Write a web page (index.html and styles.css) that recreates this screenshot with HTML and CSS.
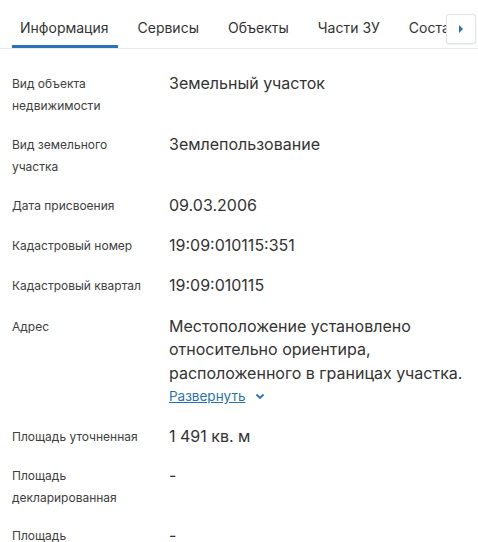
FILE: index.html
```html
<!DOCTYPE html>
<html lang="ru">
<head>
    <meta charset="UTF-8">
    <meta name="viewport" content="width=device-width, initial-scale=1.0">
    <title>Информация</title>
    <link rel="stylesheet" href="styles.css">
</head>
<body>
    <div class="tabs">
        <div class="tab-list">
            <div class="tab active">Информация</div>
            <div class="tab">Сервисы</div>
            <div class="tab">Объекты</div>
            <div class="tab">Части ЗУ</div>
            <div class="tab">Состав</div>
        </div>
        <button class="tab-next">
            <svg width="6" height="8" viewBox="0 0 6 8"><path d="M1 0 L5 4 L1 8 Z" fill="#2a72b8"/></svg>
        </button>
    </div>

    <!-- Info rows -->
    <div class="info">
        <div class="row">
            <div class="label">Вид объекта недвижимости</div>
            <div class="value">Земельный участок</div>
        </div>
        <div class="row">
            <div class="label">Вид земельного участка</div>
            <div class="value">Землепользование</div>
        </div>
        <div class="row">
            <div class="label">Дата присвоения</div>
            <div class="value">09.03.2006</div>
        </div>
        <div class="row">
            <div class="label">Кадастровый номер</div>
            <div class="value">19:09:010115:351</div>
        </div>
        <div class="row">
            <div class="label">Кадастровый квартал</div>
            <div class="value">19:09:010115</div>
        </div>
        <div class="row">
            <div class="label">Адрес</div>
            <div class="value">
                Местоположение установлено относительно ориентира, расположенного в границах участка.
                <div class="expand">
                    <a href="#">Развернуть</a>
                    <svg width="10" height="7" viewBox="0 0 10 7"><path d="M1.5 1.5 L5 5 L8.5 1.5" fill="none" stroke="#2a72b8" stroke-width="1.8"/></svg>
                </div>
            </div>
        </div>
        <div class="row">
            <div class="label">Площадь уточненная</div>
            <div class="value">1 491 кв. м</div>
        </div>
        <div class="row">
            <div class="label">Площадь декларированная</div>
            <div class="value">-</div>
        </div>
        <div class="row">
            <div class="label">Площадь</div>
            <div class="value">-</div>
        </div>
    </div>
</body>
</html>
```

FILE: styles.css
```css
* {
    margin: 0;
    padding: 0;
    box-sizing: border-box;
}

body {
    background: #fff;
    color: #333;
    font-family: Inter, "Noto Sans", sans-serif;
    overflow: hidden;
}

/* Tabs */
.tabs {
    display: flex;
    align-items: flex-end;
    border-bottom: 1px solid #e6e8eb;
    height: 49px;
    position: relative;
}

.tab-list {
    display: flex;
    overflow: hidden;
    width: 100%;
    white-space: nowrap;
}

.tab {
    font-size: 14px;
    color: #333;
    padding: 0 9px 7px 8px;
    margin-right: 12px;
    border-bottom: 3px solid transparent;
    line-height: 20px;
}

.tab:first-child {
    margin-left: 12px;
}

.tab.active {
    border-bottom-color: #2a72b8;
}

.tab-next {
    position: absolute;
    right: 2px;
    top: 14px;
    width: 30px;
    height: 30px;
    border: 1px solid #dde3ea;
    border-radius: 3px;
    background: #fff;
    display: flex;
    align-items: center;
    justify-content: center;
    box-shadow: 0 1px 2px rgba(0, 0, 0, 0.06);
}

/* Info rows */
.info {
    padding: 23px 12px 0;
}

.row {
    display: flex;
    gap: 17px;
    margin-bottom: 16px;
}

.label {
    width: 140px;
    flex-shrink: 0;
    font-size: 12px;
    line-height: 22px;
    color: #404040;
    padding-top: 1px;
}

.value {
    font-size: 16px;
    line-height: 23.5px;
    color: #333;
}

.row:nth-child(n+4) {
    margin-bottom: 17px;
}

.row:nth-child(n+7) {
    margin-bottom: 15px;
}

.expand {
    display: flex;
    align-items: center;
    gap: 10px;
    line-height: 23px;
}

.expand a {
    font-size: 13.5px;
    color: #2a72b8;
}
```
